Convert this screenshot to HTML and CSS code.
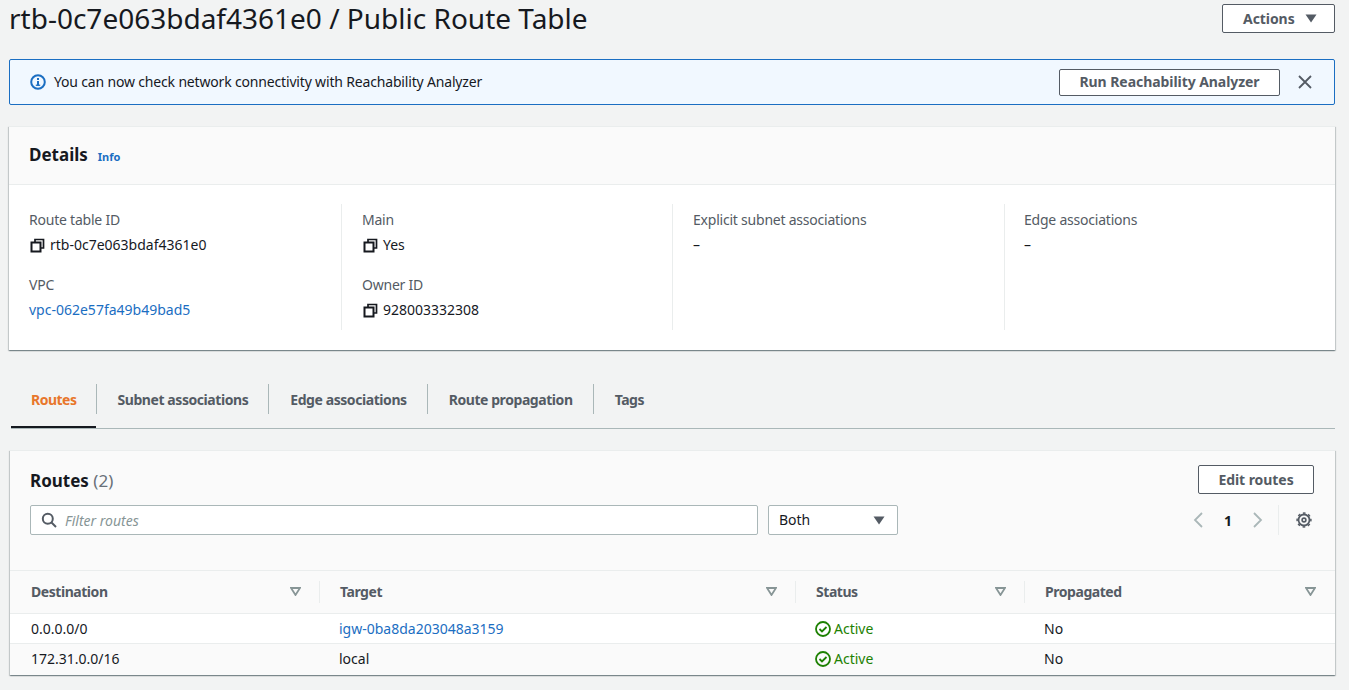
FILE: index.html
```html
<!DOCTYPE html>
<html lang="en">
<head>
    <meta charset="UTF-8">
    <title>Route Table</title>
    <link rel="stylesheet" href="styles.css">
</head>
<body>
    <div class="page-head">
        <h1>rtb-0c7e063bdaf4361e0 / Public Route Table</h1>
        <button class="btn btn-actions"><span>Actions</span><svg class="caret" width="12" height="9" viewBox="0 0 12 9"><path d="M0.500 0.500h11L6 8.500z" fill="#545b64"/></svg></button>
    </div>

    <div class="flash">
        <svg class="flash-icon" width="16" height="16" viewBox="0 0 16 16"><circle cx="8" cy="8" r="6.800" fill="none" stroke="#1b6ec2" stroke-width="2"/><rect x="7" y="7" width="2" height="4.500" fill="#1b6ec2"/><rect x="5.800" y="10.600" width="4.400" height="1.300" fill="#1b6ec2"/><rect x="7" y="4" width="2" height="2" fill="#1b6ec2"/></svg>
        <span class="flash-text">You can now check network connectivity with Reachability Analyzer</span>
        <button class="btn btn-run">Run Reachability Analyzer</button>
        <svg class="flash-close" width="14" height="14" viewBox="0 0 14 14"><path d="M1 1l12 12M13 1L1 13" stroke="#545b64" stroke-width="1.800" fill="none"/></svg>
    </div>

    <section class="card details">
        <div class="card-head">
            <h2>Details</h2>
            <a href="#" class="info">Info</a>
        </div>
        <div class="detail-cols">
            <div class="detail-col">
                <div class="field">
                    <div class="label">Route table ID</div>
                    <div class="value"><svg class="copy" width="15" height="15" viewBox="0 0 15 15"><path d="M5 4V1.500h8.500V10H11" fill="none" stroke="#16191f" stroke-width="1.700"/><rect x="1.500" y="4.500" width="9" height="9" fill="none" stroke="#16191f" stroke-width="2"/></svg>rtb-0c7e063bdaf4361e0</div>
                </div>
                <div class="field">
                    <div class="label">VPC</div>
                    <div class="value"><a href="#">vpc-062e57fa49b49bad5</a></div>
                </div>
            </div>
            <div class="detail-col">
                <div class="field">
                    <div class="label">Main</div>
                    <div class="value"><svg class="copy" width="15" height="15" viewBox="0 0 15 15"><path d="M5 4V1.500h8.500V10H11" fill="none" stroke="#16191f" stroke-width="1.700"/><rect x="1.500" y="4.500" width="9" height="9" fill="none" stroke="#16191f" stroke-width="2"/></svg>Yes</div>
                </div>
                <div class="field">
                    <div class="label">Owner ID</div>
                    <div class="value"><svg class="copy" width="15" height="15" viewBox="0 0 15 15"><path d="M5 4V1.500h8.500V10H11" fill="none" stroke="#16191f" stroke-width="1.700"/><rect x="1.500" y="4.500" width="9" height="9" fill="none" stroke="#16191f" stroke-width="2"/></svg>928003332308</div>
                </div>
            </div>
            <div class="detail-col">
                <div class="field">
                    <div class="label">Explicit subnet associations</div>
                    <div class="value">–</div>
                </div>
            </div>
            <div class="detail-col">
                <div class="field">
                    <div class="label">Edge associations</div>
                    <div class="value">–</div>
                </div>
            </div>
        </div>
    </section>

    <nav class="tabs">
        <a href="#" class="tab active">Routes</a>
        <a href="#" class="tab">Subnet associations</a>
        <a href="#" class="tab">Edge associations</a>
        <a href="#" class="tab">Route propagation</a>
        <a href="#" class="tab">Tags</a>
    </nav>

    <section class="card routes">
        <div class="routes-top">
            <h2>Routes <span class="count">(2)</span></h2>
            <button class="btn btn-edit">Edit routes</button>
        </div>
        <div class="routes-filter">
            <div class="search">
                <svg width="16" height="16" viewBox="0 0 16 16"><circle cx="6.800" cy="6.800" r="5" fill="none" stroke="#545b64" stroke-width="2"/><path d="M10.500 10.500l4.500 4.500" stroke="#545b64" stroke-width="2"/></svg>
                <span>Filter routes</span>
            </div>
            <div class="select"><span>Both</span><svg width="12" height="9" viewBox="0 0 12 9"><path d="M0.500 0.500h11L6 8.500z" fill="#545b64"/></svg></div>
            <div class="pager">
                <svg width="10" height="16" viewBox="0 0 10 16"><path d="M9 1L2 8l7 7" fill="none" stroke="#aab7b8" stroke-width="1.800"/></svg>
                <b>1</b>
                <svg width="10" height="16" viewBox="0 0 10 16"><path d="M1 1l7 7-7 7" fill="none" stroke="#aab7b8" stroke-width="1.800"/></svg>
            </div>
            <div class="settings">
                <svg width="16" height="16" viewBox="0 0 16 16"><circle cx="8" cy="8" r="5.500" fill="none" stroke="#545b64" stroke-width="1.800"/><circle cx="8" cy="8" r="1.900" fill="none" stroke="#545b64" stroke-width="1.600"/><circle cx="8" cy="8" r="6.900" fill="none" stroke="#545b64" stroke-width="1.500" stroke-dasharray="2.700 2.720" stroke-dashoffset="1.350"/></svg>
            </div>
        </div>
        <table class="route-table">
            <thead>
                <tr>
                    <th class="col-dest"><div class="th-in">Destination <svg width="11" height="9" viewBox="0 0 11 9"><path d="M1 1h9L5.500 8z" fill="none" stroke="#879596" stroke-width="1.800"/></svg></div></th>
                    <th class="col-target"><div class="th-in">Target <svg width="11" height="9" viewBox="0 0 11 9"><path d="M1 1h9L5.500 8z" fill="none" stroke="#879596" stroke-width="1.800"/></svg></div></th>
                    <th class="col-status"><div class="th-in">Status <svg width="11" height="9" viewBox="0 0 11 9"><path d="M1 1h9L5.500 8z" fill="none" stroke="#879596" stroke-width="1.800"/></svg></div></th>
                    <th class="col-prop"><div class="th-in">Propagated <svg width="11" height="9" viewBox="0 0 11 9"><path d="M1 1h9L5.500 8z" fill="none" stroke="#879596" stroke-width="1.800"/></svg></div></th>
                </tr>
            </thead>
            <tbody>
                <tr>
                    <td>0.0.0.0/0</td>
                    <td><a href="#">igw-0ba8da203048a3159</a></td>
                    <td><span class="status"><svg width="16" height="16" viewBox="0 0 16 16"><circle cx="8" cy="8" r="7" fill="none" stroke="#1d8102" stroke-width="1.800"/><path d="M4.500 8l2.500 2.500 4.500-4.500" fill="none" stroke="#1d8102" stroke-width="1.800"/></svg>Active</span></td>
                    <td>No</td>
                </tr>
                <tr>
                    <td>172.31.0.0/16</td>
                    <td>local</td>
                    <td><span class="status"><svg width="16" height="16" viewBox="0 0 16 16"><circle cx="8" cy="8" r="7" fill="none" stroke="#1d8102" stroke-width="1.800"/><path d="M4.500 8l2.500 2.500 4.500-4.500" fill="none" stroke="#1d8102" stroke-width="1.800"/></svg>Active</span></td>
                    <td>No</td>
                </tr>
            </tbody>
        </table>
    </section>
</body>
</html>
```

FILE: styles.css
```css
* {
    box-sizing: border-box;
}

body {
    margin: 0;
    padding: 0 14px 0 9px;
    height: 690px;
    overflow: hidden;
    font-family: "Noto Sans", Arial, sans-serif;
    font-size: 14px;
    color: #16191f;
    background-color: #f2f3f3;
}

a {
    color: #1b6ec2;
    text-decoration: none;
}

h1, h2 {
    margin: 0;
}

.page-head {
    display: flex;
    justify-content: space-between;
    align-items: flex-start;
    height: 59px;
    padding-top: 4px;
}

h1 {
    font-size: 28px;
    font-weight: 400;
    line-height: 30px;
    margin-top: -1px;
}

.btn {
    height: 29px;
    font-family: inherit;
    font-size: 14px;
    font-weight: 700;
    letter-spacing: -0.06px;
    color: #545b64;
    background-color: #fff;
    border: 1px solid #545b64;
    border-radius: 2px;
    padding: 0 20px;
    white-space: nowrap;
}

.btn-actions {
    width: 113px;
    display: flex;
    align-items: center;
    gap: 10px;
    padding: 0 17px 0 20px;
}

.caret {
    flex-shrink: 0;
}

.flash {
    display: flex;
    align-items: center;
    height: 46px;
    padding: 0 22px 0 20px;
    background-color: #f1f8ff;
    border: 1px solid #1b6ec2;
    border-radius: 2px;
}

.flash-icon {
    margin-right: 8px;
}

.flash-text {
    flex: 1;
    margin-top: -2px;
    letter-spacing: -0.17px;
}

.btn-run {
    height: 27px;
    width: 221px;
    padding: 0 0 2px;
    margin-right: 18px;
}

.card {
    background-color: #fafafa;
    box-shadow: 0 1px 1px 0 rgba(0, 28, 36, 0.3), 1px 1px 1px 0 rgba(0, 28, 36, 0.15), -1px 1px 1px 0 rgba(0, 28, 36, 0.15);
    border-top: 1px solid #eaeded;
}

.details {
    margin-top: 21px;
    height: 224px;
    background-color: #fff;
}

.card-head {
    display: flex;
    align-items: baseline;
    gap: 10px;
    height: 58px;
    padding: 15px 20px 0;
    background-color: #fafafa;
    border-bottom: 1px solid #eaeded;
}

h2 {
    font-size: 17px;
    font-weight: 700;
    line-height: 26px;
}

.info {
    font-size: 11px;
    font-weight: 700;
}

.detail-cols {
    display: grid;
    grid-template-columns: 333px 331px 332px 1fr;
    padding-top: 19px;
}

.detail-col {
    height: 126px;
    padding-left: 20px;
    border-right: 1px solid #eaeded;
}

.detail-col:last-child {
    padding-left: 19px;
    border-right: none;
}

.field {
    height: 65px;
}

.label {
    color: #545b64;
    line-height: 24px;
    margin-top: 4px;
    letter-spacing: -0.22px;
}

.field + .field .label {
    margin-top: 0;
}

.value {
    display: flex;
    align-items: center;
    line-height: 26px;
}

.copy {
    margin: 0 5px 0 1px;
}

.tabs {
    display: flex;
    align-items: flex-start;
    height: 45px;
    margin-top: 34px;
    margin-left: 2px;
    border-bottom: 1px solid #aab7b8;
}

.tab {
    position: relative;
    display: flex;
    align-items: center;
    height: 30px;
    padding: 0 20px 0 21px;
    color: #545b64;
    font-weight: 700;
    letter-spacing: -0.43px;
    border-right: 1px solid #aab7b8;
}

.tab:last-child {
    border-right: none;
}

.tab.active {
    padding: 0 19px 0 20px;
    letter-spacing: -0.5px;
    color: #e8762a;
}

.tab.active::after {
    content: "";
    position: absolute;
    left: 0;
    right: 0;
    bottom: -14px;
    height: 2px;
    background-color: #16191f;
}

.routes {
    margin-top: 21px;
    margin-left: 1px;
    height: 225px;
}

.routes-top {
    display: flex;
    justify-content: space-between;
    padding: 14px 21px 0 20px;
    height: 54px;
}

.routes-top h2 {
    padding-top: 3px;
}

.count {
    color: #687078;
    font-weight: 400;
}

.btn-edit {
    width: 116px;
    height: 29px;
    padding: 0;
}

.routes-filter {
    display: flex;
    align-items: center;
    height: 30px;
    padding: 0 21px 0 20px;
}

.search {
    display: flex;
    align-items: center;
    gap: 8px;
    width: 728px;
    height: 30px;
    padding-left: 10px;
    background-color: #fff;
    border: 1px solid #aab7b8;
    border-radius: 2px;
    color: #879596;
    font-style: italic;
}

.select {
    display: flex;
    align-items: center;
    justify-content: space-between;
    width: 130px;
    height: 30px;
    margin-left: 10px;
    padding: 0 12px 0 10px;
    background-color: #fff;
    border: 1px solid #aab7b8;
    border-radius: 2px;
}

.select span {
    margin-top: -2px;
}

.pager {
    display: flex;
    align-items: center;
    gap: 21px;
    margin-left: auto;
}

.settings {
    display: flex;
    align-items: center;
    height: 30px;
    margin-left: 15px;
    padding: 0 2px 0 17px;
    border-left: 1px solid #eaeded;
}

.route-table {
    width: 100%;
    margin-top: 35px;
    border-collapse: collapse;
    table-layout: fixed;
}

.route-table th {
    height: 43px;
    padding: 0 0 1px;
    text-align: left;
    color: #545b64;
    font-weight: 700;
    letter-spacing: -0.45px;
    background-color: #fafafa;
    border-top: 1px solid #eaeded;
    border-bottom: 1px solid #eaeded;
}

.col-dest {
    width: 309px;
}

.col-target {
    width: 476px;
}

.col-status {
    width: 229px;
}

.th-in {
    display: flex;
    align-items: center;
    justify-content: space-between;
    height: 22px;
    padding: 0 18px 0 20px;
    border-left: 1px solid #eaeded;
}

.col-dest .th-in {
    padding-left: 21px;
    border-left: none;
}

.col-prop .th-in {
    padding-right: 19px;
}

.route-table td {
    height: 30px;
    padding: 0 0 0 20px;
    border-bottom: 1px solid #eaeded;
}

.route-table td:first-child {
    padding-left: 21px;
}

.route-table tbody tr:first-child td {
    background-color: #fff;
}

.route-table tbody tr:last-child td {
    border-bottom: none;
}

.status {
    display: flex;
    align-items: center;
    gap: 3px;
    color: #1d8102;
}
```
